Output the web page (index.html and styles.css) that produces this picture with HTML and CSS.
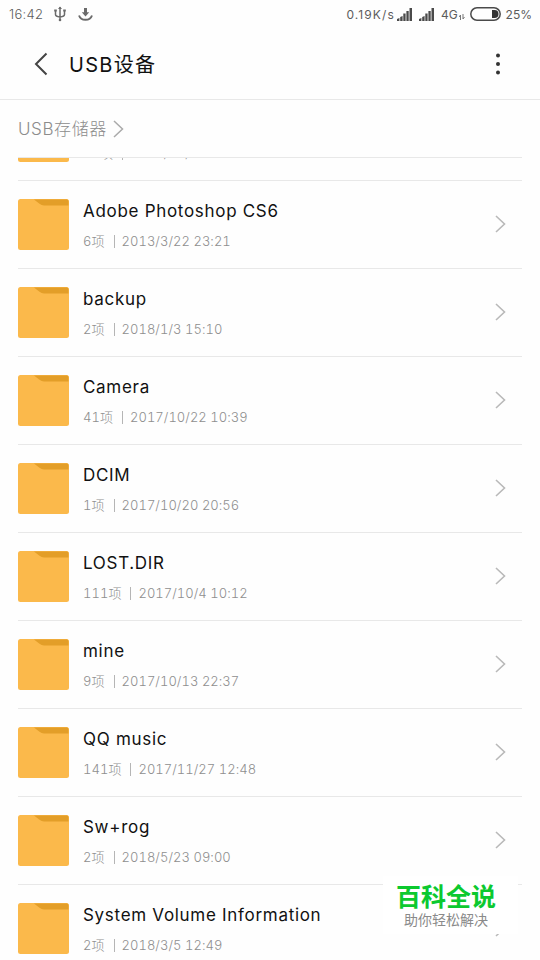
FILE: index.html
```html
<!DOCTYPE html>
<html lang="zh-CN">
<head>
  <meta charset="UTF-8">
  <title>USB设备</title>
  <link rel="stylesheet" href="styles.css">
</head>
<body>

  <div class="status-bar">
    <span class="time">16:42</span>
    <svg class="usb" width="12" height="16" viewBox="0 0 12 16" fill="none" stroke="#6b6b6b" stroke-width="1.5">
      <path d="M6 1v13M1.500 4.500v4q0 2 4.500 2.500M10.500 4.500v4q0 2-4.500 2.500"/>
      <path d="M4 3l2-2.500 2 2.500z" fill="#6b6b6b" stroke="none"/>
      <circle cx="6" cy="14" r="1.300" fill="#6b6b6b" stroke="none"/>
      <path d="M.2 4.500h2.600M9.200 4.500h2.600" stroke-width="2"/>
    </svg>
    <svg class="download" width="15" height="13" viewBox="0 0 15 13" fill="none" stroke="#6b6b6b">
      <path d="M7.500 0v5" stroke-width="3"/>
      <path d="M3.800 4.200h7.400L7.500 8.500z" fill="#6b6b6b" stroke="none"/>
      <path d="M1 7.500q1.500 4.300 6.500 4.300t6.500-4.300" stroke-width="1.900"/>
    </svg>
    <span class="speed">0.19K/s</span>
    <svg class="signal" width="15" height="13" viewBox="0 0 15 13" fill="#4a4a4a">
      <path d="M0 13v-2l2.400-1v3zM3.200 13V9l2.400-1v5zM6.300 13V5.500h2.300V13zM9.400 13V3h2.300v10zM12.500 13V0H15v13z"/>
    </svg>
    <svg class="signal" width="15" height="13" viewBox="0 0 15 13" fill="#4a4a4a">
      <path d="M0 13v-2l2.400-1v3zM3.200 13V9l2.400-1v5zM6.300 13V5.500h2.300V13zM9.400 13V3h2.300v10zM12.500 13V0H15v13z"/>
    </svg>
    <span class="network">4G</span>
    <svg class="data" width="6" height="6" viewBox="0 0 6 6" fill="none" stroke="#777">
      <path d="M1.500 6V1L0 3M4 0v5l1.500-2"/>
    </svg>
    <svg class="battery" width="31" height="14" viewBox="0 0 31 14">
      <rect x=".8" y=".8" width="29.400" height="12.400" rx="6.200" fill="none" stroke="#4a4a4a" stroke-width="1.500"/>
      <path d="M22 3h2.500a4 4 0 0 1 0 8H22z" fill="#333"/>
    </svg>
    <span class="percent">25%</span>
  </div>

  <header class="title-bar">
    <svg class="back" width="14" height="24" viewBox="0 0 14 24" fill="none" stroke="#444" stroke-width="2">
      <path d="M12.500 1.500L2 12l10.500 10.500"/>
    </svg>
    <h1>USB设备</h1>
    <svg class="more" width="4" height="22" viewBox="0 0 4 22" fill="#333">
      <circle cx="2" cy="2.500" r="2"/>
      <circle cx="2" cy="11" r="2"/>
      <circle cx="2" cy="19.500" r="2"/>
    </svg>
  </header>

  <nav class="path-bar">
    <span>USB存储器</span>
    <svg width="11" height="18" viewBox="0 0 11 18" fill="none" stroke="#aaa" stroke-width="1.500">
      <path d="M1 1l8.500 8L1 17"/>
    </svg>
  </nav>

  <ul class="file-list" id="fileList"></ul>

  <div class="brand">
    <strong>百科全说</strong>
    <span>助你轻松解决</span>
  </div>

  <script>
    const files = [
      { name: '', count: 12, date: '2017/12/31 21:21' },
      { name: 'Adobe Photoshop CS6', count: 6, date: '2013/3/22 23:21' },
      { name: 'backup', count: 2, date: '2018/1/3 15:10' },
      { name: 'Camera', count: 41, date: '2017/10/22 10:39' },
      { name: 'DCIM', count: 1, date: '2017/10/20 20:56' },
      { name: 'LOST.DIR', count: 111, date: '2017/10/4 10:12' },
      { name: 'mine', count: 9, date: '2017/10/13 22:37' },
      { name: 'QQ music', count: 141, date: '2017/11/27 12:48' },
      { name: 'Sw+rog', count: 2, date: '2018/5/23 09:00' },
      { name: 'System Volume Information', count: 2, date: '2018/3/5 12:49' }
    ];

    const list = document.getElementById('fileList');

    files.forEach(file => {
      const item = document.createElement('li');
      item.className = 'file';
      item.innerHTML = `
        <svg class="folder" width="51" height="51" viewBox="0 0 51 51">
          <rect width="51" height="51" rx="2.500" fill="#fbb94b"/>
          <path d="M16 .5h33q1.500 0 1.500 2V6.500H26q-2.500 0-4.500-1.700z" fill="#e39e28"/>
        </svg>
        <div class="info">
          <div class="name">${file.name}</div>
          <div class="meta">${file.count}项<i class="bar"></i>${file.date}</div>
        </div>
        <svg class="arrow" width="11" height="18" viewBox="0 0 11 18" fill="none" stroke="#b9b9b9" stroke-width="1.600">
          <path d="M1 1l8.500 8L1 17"/>
        </svg>
      `;
      list.appendChild(item);
    });
  </script>

</body>
</html>
```

FILE: styles.css
```css
* {
  box-sizing: border-box;
}

body {
  margin: 0;
  height: 960px;
  overflow: hidden;
  display: flex;
  flex-direction: column;
  background: #fefefe;
  font-family: Inter, "Noto Sans CJK SC", sans-serif;
  position: relative;
}

svg {
  flex: none;
  display: block;
}

.status-bar {
  height: 28px;
  flex: none;
  display: flex;
  align-items: center;
  padding: 0 8px 0 9px;
  font-size: 12px;
  color: #5c5c5c;
}

.time {
  width: 45px;
  font-size: 13px;
  font-weight: 300;
  letter-spacing: 0.3px;
}

.download {
  margin-left: 12px;
}

.speed {
  margin-left: auto;
  margin-right: 2px;
  letter-spacing: 1.1px;
}

.signal {
  margin-right: 7px;
}

.data {
  margin: 6px 5px 0 1px;
}

.percent {
  margin-left: 5px;
}

.title-bar {
  height: 72px;
  flex: none;
  display: flex;
  align-items: center;
  padding: 0 40px 0 34px;
  border-bottom: 1px solid #e8e8e8;
}

.title-bar h1 {
  margin: 0 auto 0 21px;
  font-size: 20px;
  font-weight: 400;
  letter-spacing: 1.3px;
  color: #111;
}

.path-bar {
  height: 57px;
  flex: none;
  display: flex;
  align-items: center;
  gap: 6px;
  padding-left: 18px;
  font-size: 17px;
  line-height: 24px;
  font-weight: 300;
  letter-spacing: 0.6px;
  color: #8c8c8c;
}

.file-list {
  flex: 1;
  min-height: 0;
  overflow: hidden;
  margin: 0 18px;
  padding: 0;
  list-style: none;
  display: flex;
  flex-direction: column;
  justify-content: flex-start;
  border-top: 1px solid #e8e8e8;
}

.file {
  height: 88px;
  flex: none;
  display: flex;
  align-items: center;
  padding-right: 16px;
  border-bottom: 1px solid #e8e8e8;
}

/* list is scrolled, only the end of the first row shows */
.file:first-child {
  margin-top: -65px;
}

.arrow {
  margin-bottom: 2px;
}

.info {
  flex: 1;
  margin-left: 14px;
  padding-top: 3px;
}

.name {
  height: 30px;
  line-height: 30px;
  font-size: 17px;
  letter-spacing: 0.7px;
  white-space: nowrap;
  color: #111;
}

.meta {
  height: 30px;
  line-height: 30px;
  display: flex;
  align-items: center;
  font-size: 13px;
  font-weight: 300;
  font-variant-numeric: tabular-nums;
  letter-spacing: 0.05px;
  color: #8f8f8f;
}

.bar {
  width: 1px;
  height: 13px;
  margin: 0 7px 0 9px;
  background: #b5b5b5;
}

.brand {
  position: absolute;
  left: 383px;
  top: 876px;
  width: 135px;
  height: 58px;
  display: flex;
  flex-direction: column;
  align-items: center;
  padding-right: 9px;
  background: #fff;
  font-family: "Noto Sans CJK SC", sans-serif;
}

.brand strong {
  height: 36px;
  line-height: 38px;
  font-size: 25px;
  font-weight: 700;
  color: #0cc92f;
}

.brand span {
  height: 20px;
  line-height: 14px;
  font-size: 14px;
  color: #8a8a8a;
}
```
